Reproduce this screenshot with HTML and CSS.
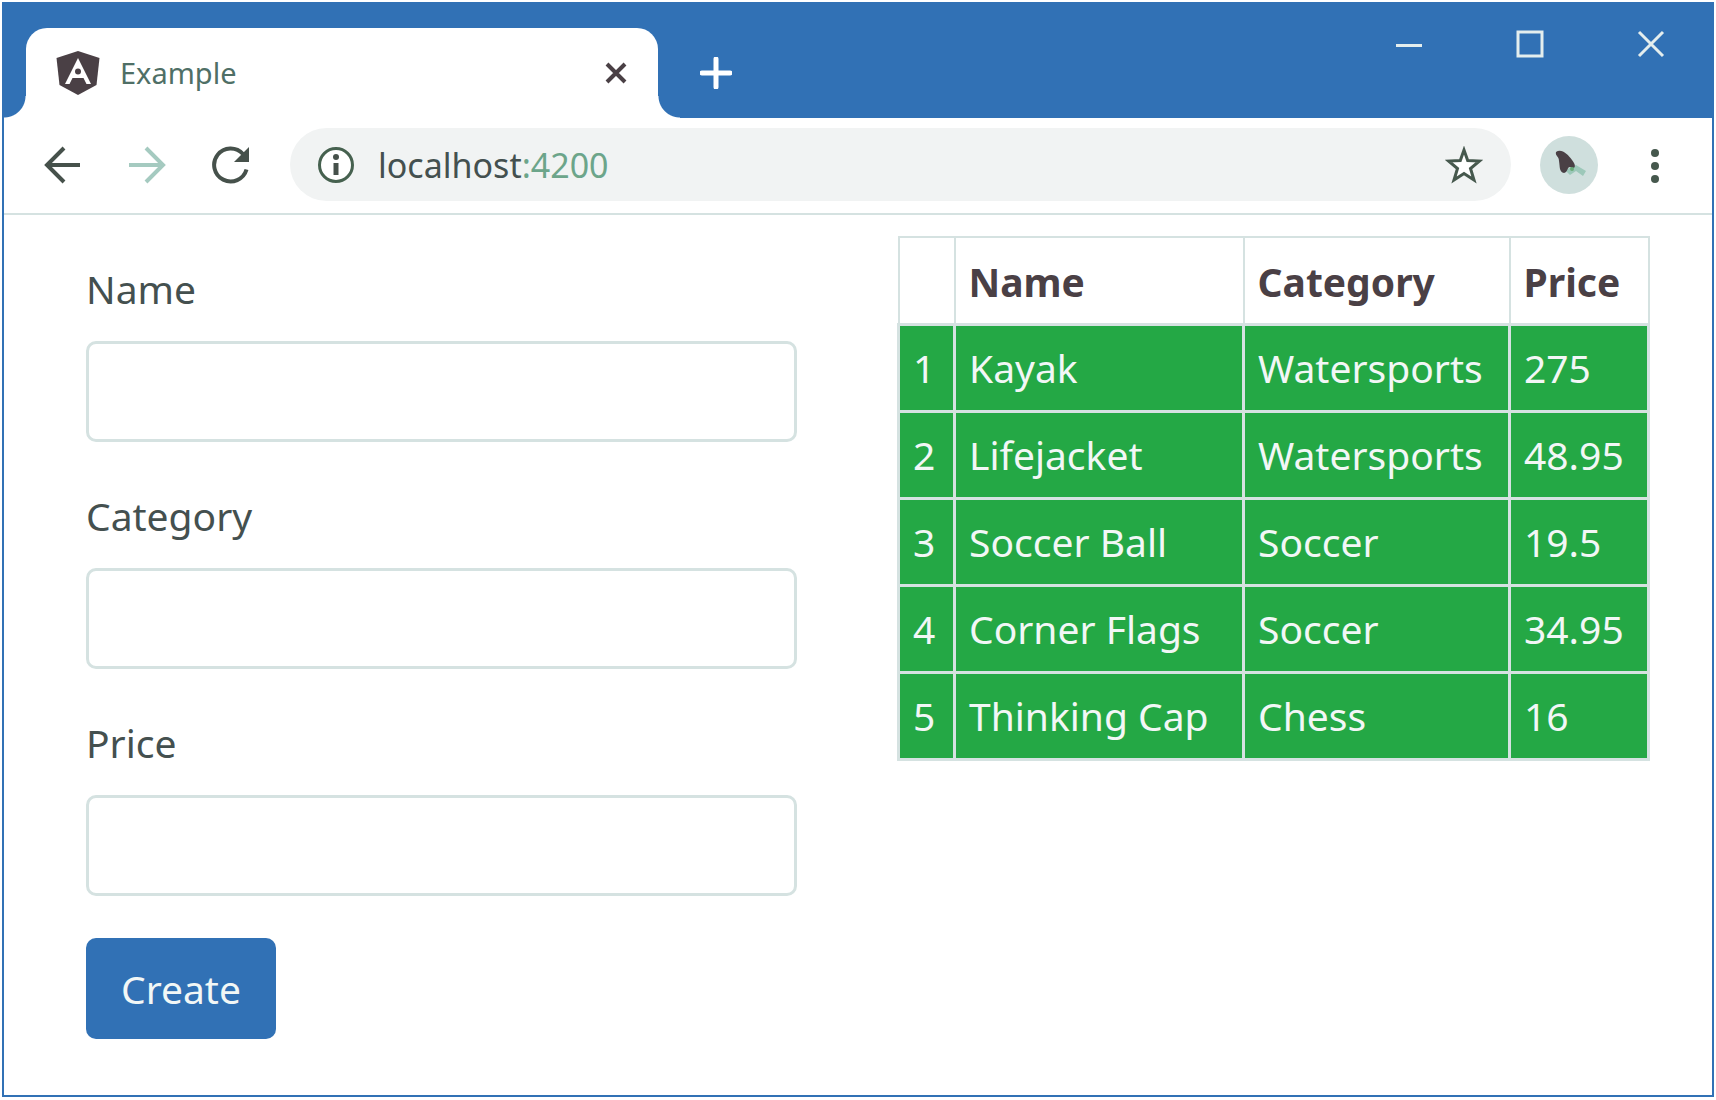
FILE: index.html
```html
<!DOCTYPE html>
<html lang="en">
<head>
<meta charset="utf-8">
<title>Example</title>
<link rel="stylesheet" href="styles.css">
</head>
<body>
<div class="window">
  <header class="titlebar">
    <div class="tabs">
      <span class="tab-foot tab-foot-left"></span>
      <div class="tab">
        <svg class="tab-logo" viewBox="0 0 44 44" aria-hidden="true">
          <path fill="#4a4045" d="M22 0 43.500 7 40.500 34 22 44 3.500 34 0.500 7z"/>
          <path fill="#fff" d="M22 7 35 33H30.500L27.500 27H16.500L13.500 33H9z"/>
          <circle cx="22" cy="20.500" r="3" fill="#4a4045"/>
        </svg>
        <span class="tab-title">Example</span>
        <button class="icon-button tab-close" aria-label="Close tab">
          <svg width="22" height="22" viewBox="0 0 22 22"><path d="M2 2 20 20M20 2 2 20" stroke="#4a4045" stroke-width="4" fill="none"/></svg>
        </button>
      </div>
      <span class="tab-foot tab-foot-right"></span>
      <button class="icon-button new-tab" aria-label="New tab">
        <svg width="32" height="32" viewBox="0 0 32 32"><path d="M16 2V30M2 16H30" stroke="#fff" stroke-width="5" stroke-linecap="round" fill="none"/></svg>
      </button>
    </div>
    <div class="window-controls">
      <button class="icon-button" aria-label="Minimize">
        <svg width="28" height="28" viewBox="0 0 28 28"><path d="M1 15.500H27" stroke="#e4eeee" stroke-width="3"/></svg>
      </button>
      <button class="icon-button" aria-label="Maximize">
        <svg width="28" height="28" viewBox="0 0 28 28"><path d="M2 2H26V26H2z" stroke="#e4eeee" stroke-width="3" fill="none"/></svg>
      </button>
      <button class="icon-button" aria-label="Close window">
        <svg width="28" height="28" viewBox="0 0 28 28"><path d="M2 2 26 26M26 2 2 26" stroke="#e4eeee" stroke-width="3" fill="none"/></svg>
      </button>
    </div>
  </header>

  <nav class="toolbar" aria-label="Browser toolbar">
    <button class="icon-button" aria-label="Back">
      <svg width="38" height="38" viewBox="0 0 38 38"><path d="M20 2 3 19 20 36M3 19H36" stroke="#46514b" stroke-width="4" fill="none"/></svg>
    </button>
    <button class="icon-button" aria-label="Forward">
      <svg width="38" height="38" viewBox="0 0 38 38"><path d="M18 2 35 19 18 36M35 19H1" stroke="#a5cac0" stroke-width="4" fill="none"/></svg>
    </button>
    <button class="icon-button" aria-label="Reload">
      <svg width="38" height="38" viewBox="0 0 38 38"><path d="M34.500 23.500A16.500 16.500 0 1 1 31 8" stroke="#46514b" stroke-width="4" fill="none"/><path d="M37 1V16H22z" fill="#46514b"/></svg>
    </button>
    <div class="omnibox">
      <svg width="38" height="38" viewBox="0 0 38 38" aria-hidden="true"><circle cx="19" cy="19" r="16.500" stroke="#46614f" stroke-width="3" fill="#fff"/><path d="M19 17V29" stroke="#46514b" stroke-width="5"/><circle cx="19" cy="11" r="3" fill="#46514b"/></svg>
      <span class="url">localhost<span class="port">:4200</span></span>
      <button class="icon-button star" aria-label="Bookmark this page">
        <svg width="38" height="38" viewBox="0 0 38 38"><path d="M19 4 22.700 14.500 34.500 15 25.500 22.500 29 34 19 27.500 9 34 12.500 22.500 3.500 15 15.300 14.500z" stroke="#46584d" stroke-width="3" fill="#fff"/></svg>
      </button>
    </div>
    <button class="icon-button avatar" aria-label="Profile">
      <svg width="58" height="58" viewBox="0 0 58 58"><circle cx="29" cy="29" r="29" fill="#cfdfdd"/><path d="M25 34 36 29 46 35 43 40 36 35 30 39z" fill="#9cc8b9"/><path d="M16 16C21 12 28 18 32 24 37 30 35 34 30 31 27 31 28 36 24 37 19 36 20 31 19 25 19 20 15 20 16 16z" fill="#4a4045"/><circle cx="32" cy="33" r="2" fill="#68ab78"/></svg>
    </button>
    <button class="icon-button menu" aria-label="Menu">
      <svg width="10" height="38" viewBox="0 0 10 38"><g fill="#46584d"><circle cx="5" cy="7" r="4"/><circle cx="5" cy="20" r="4"/><circle cx="5" cy="33" r="4"/></g></svg>
    </button>
  </nav>

  <main class="content">
    <form class="product-form">
      <div class="field">
        <label for="name">Name</label>
        <input id="name" name="name" type="text">
      </div>
      <div class="field">
        <label for="category">Category</label>
        <input id="category" name="category" type="text">
      </div>
      <div class="field">
        <label for="price">Price</label>
        <input id="price" name="price" type="text">
      </div>
      <button class="create" type="submit">Create</button>
    </form>

    <div class="product-list">
      <table>
        <colgroup><col class="col-index"><col class="col-name"><col class="col-category"><col class="col-price"></colgroup>
        <thead>
          <tr><th></th><th scope="col">Name</th><th scope="col">Category</th><th scope="col">Price</th></tr>
        </thead>
        <tbody>
          <tr><td>1</td><td>Kayak</td><td>Watersports</td><td>275</td></tr>
          <tr><td>2</td><td>Lifejacket</td><td>Watersports</td><td>48.95</td></tr>
          <tr><td>3</td><td>Soccer Ball</td><td>Soccer</td><td>19.5</td></tr>
          <tr><td>4</td><td>Corner Flags</td><td>Soccer</td><td>34.95</td></tr>
          <tr><td>5</td><td>Thinking Cap</td><td>Chess</td><td>16</td></tr>
        </tbody>
      </table>
    </div>
  </main>
</div>
</body>
</html>
```
FILE: styles.css
```css
:root {
  --blue: #3171b5;
  --green: #24a845;
  --line: #d5e2e1;
  --ink: #44504f;
}

* {
  box-sizing: border-box;
}

body {
  display: flex;
  min-height: 100vh;
  margin: 0;
  padding: 2px 2px 3px;
  background: #fff;
  color: var(--ink);
  font-family: "Noto Sans", "Open Sans", sans-serif;
  font-size: 39px;
  line-height: 63px;
}

button,
input {
  font: inherit;
}

svg {
  display: block;
  flex: none;
}

.window {
  display: flex;
  flex: 1;
  flex-direction: column;
  min-width: 0;
  border: 2px solid var(--blue);
  border-top: 0;
}

.icon-button {
  display: flex;
  align-items: center;
  justify-content: center;
  padding: 0;
  border: 0;
  background: none;
}

/* Title bar */
.titlebar {
  display: flex;
  justify-content: space-between;
  background: var(--blue);
}

.tabs {
  display: flex;
  padding-top: 26px;
}

.tab {
  display: flex;
  align-items: center;
  width: 632px;
  height: 90px;
  padding: 0 31px 0 30px;
  border-radius: 21px 21px 0 0;
  background: #fff;
}

.tab-foot {
  align-self: flex-end;
  width: 22px;
  height: 22px;
}

.tab-foot-left {
  background: radial-gradient(circle at 0 0, transparent 21px, #fff 22px);
}

.tab-foot-right {
  background: radial-gradient(circle at 100% 0, transparent 21px, #fff 22px);
}

.tab-logo {
  width: 44px;
  height: 44px;
}

.tab-title {
  flex: 1;
  margin-left: 20px;
  color: #4f6f66;
  font-size: 29px;
  line-height: 40px;
}

.new-tab {
  width: 72px;
  height: 90px;
}

.window-controls {
  display: flex;
  padding-right: 1px;
}

.window-controls .icon-button {
  width: 121px;
  height: 84px;
}

/* Toolbar */
.toolbar {
  display: flex;
  align-items: center;
  padding: 10px 15px 12px 17px;
  border-bottom: 2px solid var(--line);
}

.toolbar > .icon-button {
  width: 84px;
  height: 58px;
}

.omnibox {
  display: flex;
  flex: 1;
  align-items: center;
  height: 73px;
  margin-left: 17px;
  padding: 0 28px 0 27px;
  border-radius: 37px;
  background: #f1f3f3;
}

.url {
  flex: 1;
  margin-left: 23px;
  font-size: 34px;
  line-height: 48px;
}

.port {
  color: #6ca58a;
}

.toolbar > .avatar {
  width: 58px;
  margin: 0 15px 0 29px;
}

/* Page */
.content {
  display: grid;
  flex: 1;
  grid-template-columns: 1fr 1fr;
  align-items: start;
}

.product-form {
  padding: 42px 61px 42px 82px;
}

.field {
  margin-bottom: 42px;
}

.field label {
  display: block;
  margin-bottom: 21px;
}

.field input {
  display: block;
  width: 100%;
  height: 101px;
  padding: 16px 30px;
  border: 3px solid var(--line);
  border-radius: 10px;
  background: #fff;
  color: inherit;
}

.create {
  height: 101px;
  padding: 0 35px;
  border: 0;
  border-radius: 10px;
  background: var(--blue);
  color: #f2f7f6;
}

.product-list {
  padding: 21px 62px 42px 39px;
}

table {
  width: 100%;
  border-collapse: collapse;
  table-layout: fixed;
}

.col-index {
  width: 56px;
}

.col-name {
  width: 289px;
}

.col-category {
  width: 266px;
}

th,
td {
  height: 87px;
  padding: 0 13px;
  border: 3px solid var(--line);
  text-align: left;
  white-space: nowrap;
}

th {
  padding-top: 3px;
  border-width: 2px;
  color: #4a4045;
}

tbody {
  background: var(--green);
  color: #f2f7f6;
}
```
